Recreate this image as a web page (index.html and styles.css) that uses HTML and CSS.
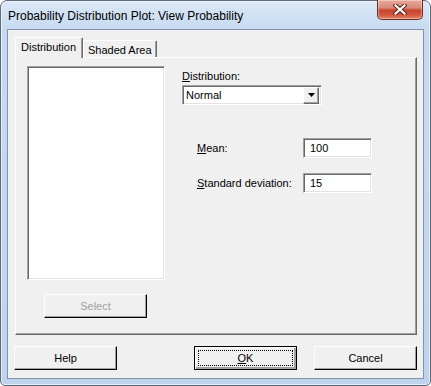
FILE: index.html
```html
<!DOCTYPE html>
<html lang="en">
<head>
  <meta charset="UTF-8" />
  <title>Probability Distribution Plot: View Probability</title>
  <link rel="stylesheet" href="styles.css">
</head>
<body>
  <div class="window">
    <div class="titlebar">
      <span class="title">Probability Distribution Plot: View Probability</span>
      <div class="close-btn">
        <svg width="14" height="11" viewBox="0 0 14 11">
          <path d="M2.5 1.5 L11.5 9.5 M11.5 1.5 L2.5 9.5" stroke="#5a2018" stroke-width="4.2" stroke-linecap="square" fill="none"/>
          <path d="M2.5 1.5 L11.5 9.5 M11.5 1.5 L2.5 9.5" stroke="#fff" stroke-width="2.2" stroke-linecap="square" fill="none"/>
        </svg>
      </div>
    </div>
    <div class="client">
      <div class="tabs">
        <div class="tab active">Distribution</div>
        <div class="tab">Shaded Area</div>
      </div>
      <div class="panel">
        <div class="left-col">
          <div class="listbox"></div>
          <div class="btn select-btn">Select</div>
        </div>
        <div class="right-col">
          <div class="field-label"><u>D</u>istribution:</div>
          <div class="combo sunken">
            <span class="combo-text">Normal</span>
            <span class="combo-arrow">
              <svg width="7" height="4" viewBox="0 0 7 4"><path d="M0 0 H7 L3.5 4 Z" fill="#000"/></svg>
            </span>
          </div>
          <div class="param-row mean-row">
            <span class="param-label"><u>M</u>ean:</span>
            <div class="text-input sunken">100</div>
          </div>
          <div class="param-row std-row">
            <span class="param-label"><u>S</u>tandard deviation:</span>
            <div class="text-input sunken">15</div>
          </div>
        </div>
      </div>
      <div class="buttons">
        <div class="btn help-btn">Help</div>
        <div class="btn ok-btn"><span class="focus-rect"><u>O</u>K</span></div>
        <div class="btn cancel-btn">Cancel</div>
      </div>
    </div>
  </div>
</body>
</html>
```

FILE: styles.css
```css
body {
  margin: 0;
  background: #fff;
  font-family: 'Liberation Sans', Arial, sans-serif;
  font-size: 11px;
  color: #000;
}
.window {
  width: 431px;
  height: 386px;
  box-sizing: border-box;
  border: 1px solid #5d6b7c;
  border-radius: 7px 7px 5px 5px;
  background: linear-gradient(to bottom, #dbe8f7 0, #c7daf1 28px, #bfd3ec 100%);
  box-shadow: inset 0 0 0 1px rgba(255,255,255,0.55);
  padding: 0 6px 6px;
}
.titlebar {
  display: flex;
  height: 28px;
}
.title {
  padding-left: 1px;
  padding-top: 8px;
  font-size: 12px;
  line-height: 14px;
  color: #000;
}
.close-btn {
  margin-left: auto;
  margin-right: 1px;
  margin-top: -1px;
  width: 46px;
  height: 20px;
  box-sizing: border-box;
  border: 1px solid #6e2a20;
  border-top: none;
  border-radius: 0 0 5px 5px;
  background: linear-gradient(to bottom, #e9a99b 0, #d98a78 40%, #c5452e 55%, #d3593f 80%, #e48a6c 100%);
  box-shadow: inset 0 0 0 1px rgba(255,255,255,0.35);
  display: flex;
  align-items: center;
  justify-content: center;
}
.client {
  height: 350px;
  box-sizing: border-box;
  border: 1px solid #8394aa;
  background: #f0f0f0;
}
.tabs {
  display: flex;
  align-items: flex-end;
  height: 27px;
  padding-left: 7px;
}
.tab {
  box-sizing: border-box;
  border-top: 1px solid #fff;
  border-left: 1px solid #fff;
  border-right: 1px solid #696969;
  box-shadow: inset -1px 0 #a0a0a0;
  border-radius: 2px 2px 0 0;
  background: #f0f0f0;
  height: 17px;
  width: 74px;
  padding: 3px 0 0 4px;
  line-height: 12px;
}
.tab.active {
  position: relative;
  z-index: 1;
  width: 68px;
  height: 21px;
  margin-bottom: -1px;
  padding: 3px 0 0 5px;
}
.panel {
  display: flex;
  margin-left: 7px;
  width: 402px;
  height: 278px;
  box-sizing: border-box;
  border: 1px solid #696969;
  border-top-color: #fff;
  border-left-color: #fff;
  box-shadow: inset -1px -1px #a0a0a0;
  padding: 8px 0 0 11px;
}
.left-col {
  width: 138px;
}
.listbox {
  height: 214px;
  box-sizing: border-box;
  background: #fff;
  border: 1px solid #fff;
  border-top-color: #a0a0a0;
  border-left-color: #a0a0a0;
  box-shadow: inset 1px 1px #696969, inset -1px -1px #e3e3e3;
}
.sunken {
  box-sizing: border-box;
  background: #fff;
  border: 1px solid #fff;
  border-top-color: #a0a0a0;
  border-left-color: #a0a0a0;
  box-shadow: inset 1px 1px #696969, inset -1px -1px #e3e3e3;
}
.btn {
  box-sizing: border-box;
  width: 103px;
  height: 24px;
  display: flex;
  align-items: center;
  justify-content: center;
  background: #f0f0f0;
  border: 1px solid #000;
  border-top-color: #fff;
  border-left-color: #fff;
  box-shadow: inset -1px -1px #a0a0a0;
}
.select-btn {
  margin: 14px 0 0 17px;
  color: #a0a0a0;
}
.right-col {
  margin-left: 17px;
  padding-top: 3px;
}
.field-label {
  line-height: 15px;
}
.combo {
  display: flex;
  align-items: center;
  width: 140px;
  height: 20px;
  margin-top: 1px;
  padding-left: 3px;
}
.combo-text {
  flex: 1;
}
.combo-arrow {
  width: 16px;
  height: 17px;
  margin-right: 2px;
  box-sizing: border-box;
  background: #f0f0f0;
  border: 1px solid #696969;
  border-top-color: #fff;
  border-left-color: #fff;
  box-shadow: inset -1px -1px #a0a0a0;
  display: flex;
  align-items: center;
  justify-content: center;
}
.param-row {
  display: flex;
  align-items: center;
  padding-left: 15px;
}
.mean-row {
  margin-top: 33px;
}
.std-row {
  margin-top: 15px;
}
.param-label {
  width: 106px;
}
.text-input {
  width: 69px;
  height: 20px;
  padding: 3px 0 0 6px;
  line-height: 13px;
}
.buttons {
  display: flex;
  margin-top: 11px;
}
.help-btn {
  margin-left: 6px;
}
.ok-btn {
  margin-left: 77px;
  border: 1px solid #000;
  box-shadow: inset 1px 1px #fff, inset -2px -2px #a0a0a0;
  padding: 3px;
}
.focus-rect {
  flex: 1;
  align-self: stretch;
  display: flex;
  align-items: center;
  justify-content: center;
  border: 1px dotted #000;
}
.cancel-btn {
  margin-left: 17px;
}
```
